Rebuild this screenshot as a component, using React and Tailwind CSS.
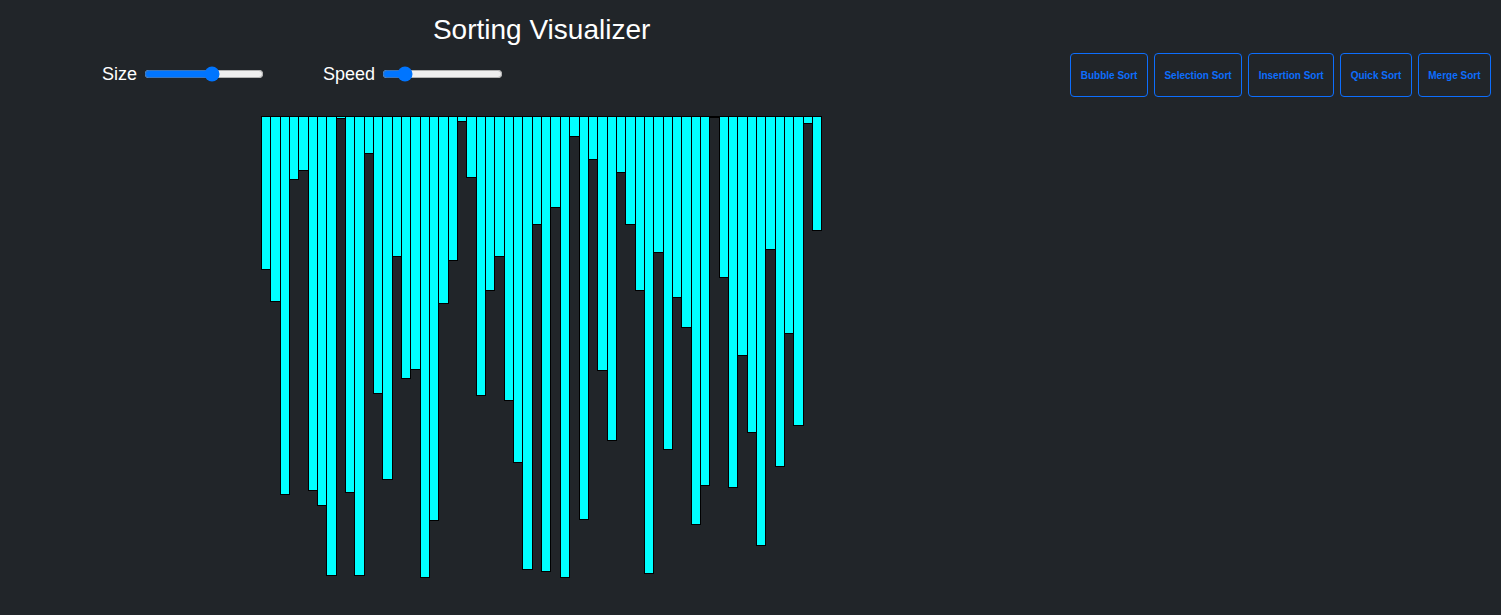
import React, { useState } from 'react';

const barHeights = [
    154, 186, 379, 64, 55, 375, 390, 460, 3, 377,
    460, 38, 278, 364, 141, 263, 254, 462, 405, 188,
    145, 6, 62, 280, 175, 141, 285, 347, 454, 109,
    456, 92, 462, 21, 404, 44, 255, 325, 57, 109,
    175, 458, 137, 334, 182, 212, 409, 370, 2, 162,
    372, 240, 317, 430, 134, 351, 218, 310, 8, 115,
];

const algorithms = ['Bubble Sort', 'Selection Sort', 'Insertion Sort', 'Quick Sort', 'Merge Sort'];

const App = () => {
    const [size, setSize] = useState(60);
    const [speed, setSpeed] = useState(15);

    return (
        <div className="min-h-screen bg-[#212529] text-white font-['Liberation_Sans',Arial,sans-serif]">
            <div className="flex">
                {/* Left side: title, controls and bars */}
                <div className="flex-1 min-w-0">
                    <h1 className="pt-[14px] pl-[13px] text-center text-[28px] leading-[32px] font-normal">
                        Sorting Visualizer
                    </h1>

                    <div className="flex items-center h-[56px] pl-[102px] text-[18px]">
                        <label>Size</label>
                        <input
                            type="range"
                            min="5"
                            max="100"
                            value={size}
                            onChange={(e) => setSize(Number(e.target.value))}
                            className="ml-[7px] w-[120px]"
                        />
                        <label className="ml-[59px]">Speed</label>
                        <input
                            type="range"
                            min="1"
                            max="100"
                            value={speed}
                            onChange={(e) => setSpeed(Number(e.target.value))}
                            className="ml-[7px] w-[121px]"
                        />
                    </div>

                    {/* Bars */}
                    <div className="flex justify-center items-start pt-[14px] pl-[13px]">
                        {barHeights.map((h, i) => (
                            <div
                                key={i}
                                className="w-[10.355px] -mr-px last:mr-0 shrink-0 border border-black bg-[#00ffff]"
                                style={{ height: `${h}px` }}
                            />
                        ))}
                    </div>
                </div>

                {/* Right side: algorithm buttons */}
                <div className="shrink-0 flex gap-[6px] pt-[53px] pr-[10px]">
                    {algorithms.map((name) => (
                        <button
                            key={name}
                            className="h-[44px] px-[9.5px] whitespace-nowrap rounded-[4px] border border-[#0d6efd] text-[#0d6efd] text-[10px] font-bold hover:bg-[#0d6efd] hover:text-white"
                        >
                            {name}
                        </button>
                    ))}
                </div>
            </div>
        </div>
    );
};

export default App;
